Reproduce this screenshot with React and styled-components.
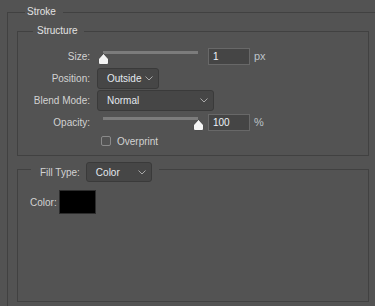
import React, { useState } from "react";
import styled, { createGlobalStyle } from "styled-components";

const GlobalStyle = createGlobalStyle`
  html, body {
    margin: 0;
    padding: 0;
    background: #535353;
    overflow: hidden;
  }
  body {
    font-family: "Liberation Sans", Arial, sans-serif;
    font-size: 10px;
    color: #d2d2d2;
  }
`;

const Page = styled.div`
  width: 375px;
  height: 306px;
  overflow: hidden;
  padding-top: 5px;
  box-sizing: border-box;
`;

const Group = styled.fieldset`
  margin: 0 0 0 7px;
  padding: 5px 0 0 9px;
  width: 420px;
  border: 1px solid #414141;
  border-right: none;
  border-bottom: none;
  box-sizing: border-box;
  min-height: 320px;
`;

const GroupTitle = styled.legend`
  margin-left: 8px;
  padding: 0 7px 0 2px;
  line-height: 14px;
  color: #e2e2e2;
`;

const Section = styled.fieldset`
  margin: 0;
  width: 352px;
  box-sizing: border-box;
  border: 1px solid #414141;
  padding: ${(p) => p.$pad};
`;

const SectionTitle = styled.legend`
  margin-left: 15px;
  padding: 0 6px 0 4px;
  line-height: 14px;
  color: #e2e2e2;
`;

const FillLegend = styled.legend`
  margin-left: 1px;
  padding: 6px 7px 0 9px;
  display: flex;
  align-items: center;
  gap: 6px;
`;

const Row = styled.div`
  display: flex;
  align-items: center;
  height: ${(p) => p.$h || 22}px;
`;

const Label = styled.span`
  width: 72px;
  padding-right: 1px;
  margin-right: 6px;
  text-align: right;
  white-space: nowrap;
`;

const Slider = styled.div`
  position: relative;
  width: 111px;
  height: 22px;
  align-self: stretch;
`;

const Track = styled.div`
  position: absolute;
  left: 6px;
  top: 6px;
  width: 95px;
  height: 3px;
  background: #7c7c7c;
`;

const Thumb = styled.svg`
  position: absolute;
  top: 8px;
  width: 11px;
  height: 12px;
`;

const NumberBox = styled.input`
  width: 42px;
  height: 17px;
  box-sizing: border-box;
  background: #454545;
  border: 1px solid #686868;
  color: #eef3f8;
  font: inherit;
  padding: 0 0 0 4px;
  margin: 0;
  outline: none;
`;

const Unit = styled.span`
  margin-left: 4px;
  color: #bcc3c9;
  font-size: 11px;
`;

const SelectBox = styled.div`
  display: flex;
  align-items: center;
  justify-content: space-between;
  width: ${(p) => p.$w}px;
  height: ${(p) => p.$h || 21}px;
  box-sizing: border-box;
  padding: 0 5px 0 9px;
  background: #464646;
  border: 1px solid #3a3a3a;
  border-radius: 3px;
  color: #e4e9ef;
`;

const CheckRow = styled.label`
  display: flex;
  align-items: center;
  gap: 6px;
  margin-left: 4px;
  cursor: default;
`;

const CheckBox = styled.span`
  width: 10px;
  height: 10px;
  box-sizing: border-box;
  border: 1px solid #8a8a8a;
  border-radius: 2px;
  background: ${(p) => (p.$on ? "#8a8a8a" : "transparent")};
`;

const ColorRow = styled.div`
  display: flex;
  align-items: center;
  gap: 2px;
`;

const Swatch = styled.div`
  width: 37px;
  height: 24px;
  box-sizing: border-box;
  background: #000;
  border: 1px solid #2c2c2c;
`;

const Chevron = () => (
  <svg width="8" height="5" viewBox="0 0 8 5">
    <path d="M0.5 0.5 L4 4 L7.5 0.5" fill="none" stroke="#a8a8a8" strokeWidth="1" />
  </svg>
);

const RangeSlider = ({ value }) => (
  <Slider>
    <Track />
    <Thumb viewBox="0 0 11 12" style={{ left: 6 + value * 95 - 5.5 }}>
      <path
        d="M5.5 0.5 L10.5 6 V10 Q10.5 11.5 9 11.5 H2 Q0.5 11.5 0.5 10 V6 Z"
        fill="#f4f4f4"
        stroke="#3a3a3a"
        strokeWidth="0.8"
      />
    </Thumb>
  </Slider>
);

const Select = ({ value, w, h }) => (
  <SelectBox $w={w} $h={h}>
    <span>{value}</span>
    <Chevron />
  </SelectBox>
);

export default function App() {
  const [overprint, setOverprint] = useState(false);

  return (
    <Page>
      <GlobalStyle />
      <Group>
        <GroupTitle>Stroke</GroupTitle>
        <Section $pad="7px 0 6px 0">
          <SectionTitle>Structure</SectionTitle>
          <Row>
            <Label>Size:</Label>
            <RangeSlider value={0} />
            <NumberBox defaultValue="1" />
            <Unit>px</Unit>
          </Row>
          <Row>
            <Label>Position:</Label>
            <Select value="Outside" w={62} />
          </Row>
          <Row>
            <Label>Blend Mode:</Label>
            <Select value="Normal" w={117} />
          </Row>
          <Row>
            <Label>Opacity:</Label>
            <RangeSlider value={1} />
            <NumberBox defaultValue="100" />
            <Unit>%</Unit>
          </Row>
          <Row $h={16}>
            <Label />
            <CheckRow onClick={() => setOverprint(!overprint)}>
              <CheckBox $on={overprint} />
              Overprint
            </CheckRow>
          </Row>
        </Section>
        <Section $pad="8px 0 87px 12px">
          <FillLegend>
            Fill Type:
            <Select value="Color" w={66} h={20} />
          </FillLegend>
          <ColorRow>
            <span>Color:</span>
            <Swatch />
          </ColorRow>
        </Section>
      </Group>
    </Page>
  );
}
